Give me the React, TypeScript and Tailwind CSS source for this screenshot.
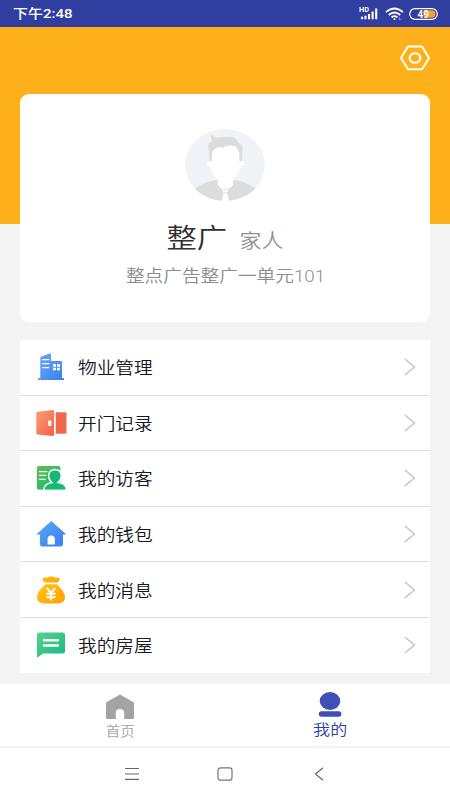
import type { ReactNode } from 'react'

interface MenuItem {
  label: string
  icon: ReactNode
}

function Gradient({ id, from, to }: { id: string; from: string; to: string }) {
  return (
    <defs>
      <linearGradient id={id} x1="0" y1="0" x2="1" y2="1">
        <stop offset="0" stopColor={from} />
        <stop offset="1" stopColor={to} />
      </linearGradient>
    </defs>
  )
}

function BuildingIcon() {
  return (
    <svg viewBox="0 0 32 32" className="size-8">
      <Gradient id="building" from="#6aaaf8" to="#3c7fee" />
      <path
        fill="url(#building)"
        d="M5.3 6.6Q5.3 5.7 6.2 5.4L14.8 2.4Q16 2 16 3.2V10H26Q27 10 27 11V27.3H29V29H3V27.3H5.3Z"
      />
      <path stroke="#fff" strokeWidth="1.3" d="M7.3 8.6h7M7.3 12.6h7M7.3 16.6h7" />
      <path fill="#fff" d="M18 13h3v2.8h-3zM22 13h3v2.8h-3zM18 16.7h3v2.6h-3zM22 16.7h3v2.6h-3z" />
    </svg>
  )
}

function DoorIcon() {
  return (
    <svg viewBox="0 0 32 32" className="size-8">
      <Gradient id="door" from="#f9a072" to="#f35f47" />
      <path
        fill="url(#door)"
        d="M1.3 6Q1.3 4.9 2.4 4.8L17.6 3Q19 2.8 19 4.2V27.8Q19 29.2 17.6 29L2.4 27.4Q1.3 27.2 1.3 26.2Z"
      />
      <rect x="20.7" y="5.3" width="10.8" height="21.4" rx="1" fill="#f3684c" />
      <rect x="13" y="13.3" width="3.4" height="6" rx="1.7" fill="#fff" />
    </svg>
  )
}

function VisitorIcon() {
  return (
    <svg viewBox="0 0 32 32" className="size-8">
      <Gradient id="visitor" from="#65bd51" to="#10b97c" />
      <rect x="1.8" y="4" width="23.6" height="23.8" rx="1.8" fill="url(#visitor)" />
      <path stroke="#fff" strokeWidth="1.4" strokeLinecap="round" d="M4.6 9.6h7.2M4.6 13.4h6M4.6 17.4h5.4" />
      <path
        fill="#16ba76"
        stroke="#fff"
        strokeWidth="1.5"
        d="M9 27Q9.4 22 17 20.6Q13.6 17.8 13.6 13.6Q14 7.6 20 7.4Q26 7.6 26.4 13.6Q26.4 17.8 23.2 20.4Q31 21.6 31.3 27Q31.3 28.6 29.6 28.6H10.6Q9 28.6 9 27Z"
      />
      <path fill="#fff" d="M0 27.8h32V32H0z" />
    </svg>
  )
}

function WalletIcon() {
  return (
    <svg viewBox="0 0 32 32" className="size-8">
      <Gradient id="wallet" from="#55a9f7" to="#3b7eef" />
      <path
        fill="url(#wallet)"
        stroke="url(#wallet)"
        strokeWidth="1"
        strokeLinejoin="round"
        d="M16.3 3.6 30.3 16H27.5V26.6Q27.5 28 26 28H7Q5.4 28 5.4 26.6V16H2.3Z"
      />
      <path fill="#fff" d="M12.6 26.6V21Q12.6 17.4 16.2 17.4T19.8 21V26.6Z" />
    </svg>
  )
}

function MoneyBagIcon() {
  return (
    <svg viewBox="0 0 32 32" className="size-8">
      <Gradient id="bag" from="#ffc414" to="#ffa200" />
      <path
        fill="url(#bag)"
        d="M10.2 8.6Q6.2 6 7.8 4.2Q9 3 12 3.7Q13 2.2 16 2.2T20 3.7Q23.4 3 24.4 4.2Q25.8 6 21.8 8.6Z"
      />
      <path fill="url(#bag)" d="M10.6 10.2H21.6Q30 17.5 30 23Q30 29.4 22.5 29.4H9.6Q2 29.4 2 23Q2 17.5 10.6 10.2Z" />
      <path
        fill="none"
        stroke="#fff"
        strokeWidth="2"
        d="M11.8 14 16 19 20.2 14M16 18.6V26.4M11.4 19.8H20.6M11.4 23.2H20.6"
      />
    </svg>
  )
}

function MessageIcon() {
  return (
    <svg viewBox="0 0 32 32" className="size-8">
      <Gradient id="message" from="#55d28c" to="#17b883" />
      <path
        fill="url(#message)"
        d="M2 5.8Q2 3.5 4.2 3.5H27.8Q30 3.5 30 5.8V22.2Q30 24.4 27.8 24.4H8L3 28.2Q2 28.8 2 27.6Z"
      />
      <path stroke="#fff" strokeWidth="2.4" strokeLinecap="round" d="M9 11.3h14M9 16.5h14" />
    </svg>
  )
}

function Avatar() {
  return (
    <svg viewBox="0 0 80 72" className="h-[72px] w-20">
      <defs>
        <clipPath id="avatar">
          <ellipse cx="40" cy="36" rx="40" ry="36" />
        </clipPath>
      </defs>
      <g clipPath="url(#avatar)">
        <path fill="#f1f3f9" d="M0 0h80v72H0z" />
        <path fill="#dcdcdc" d="M5 64Q14 53.5 32.5 50.8H48Q66 53.5 76 64V74H5Z" />
        <path
          fill="#fff"
          d="M26 16H55V31.5Q59 31 58.8 34.5Q58.3 38.2 55 38.4Q53.5 46 48 50.5V55.5Q45.5 60.3 40.3 60.3T32.6 55.5V50.5Q27.2 46 25.6 38.4Q22.6 38.2 22.2 34.5Q22 31 26 31.5Z"
        />
        <path
          fill="#dcdcdc"
          d="M24.2 32V22Q22 18 24.2 14Q27.2 13 26.3 10Q25.2 8 26.2 5Q29 9 34 8.4Q41 7.2 47 8Q52 9 53.2 13.5Q58.5 15.5 57.5 20L57 32H54.3V25Q53.5 18.5 49 17Q42 15.5 39 18Q37.5 19.5 34.6 19.2L36.5 17.5Q28.5 18 27 25V32Z"
        />
        <path fill="#fff" d="M36.8 59.6H43.6L42.2 64 44.2 72H36.6L38.6 64Z" />
        <path fill="#dcdcdc" d="M37.6 60.3H43V61H37.6ZM38.8 63H42V63.7H38.8Z" />
      </g>
    </svg>
  )
}

function StatusBar() {
  return (
    <header className="flex h-[27px] items-center justify-between bg-[#303f9f] pr-3 pl-[13px] text-white">
      <span className="origin-left scale-x-[1.19] pt-[2px] text-[12.6px] leading-none font-medium">下午2:48</span>
      <div className="flex items-center">
        <svg viewBox="0 0 20 14" className="mr-[6px] h-[14px] w-5">
          <text x="0" y="5.4" fontSize="6.5" fontWeight="700" fill="#fff" textLength="10" lengthAdjust="spacingAndGlyphs">
            HD
          </text>
          <path stroke="#fff" strokeWidth="2.1" d="M3 12.3V9.8M6.4 12.3V8.8M10 12.3V7M13.6 12.3V4.5M17.2 12.3V1.5" />
        </svg>
        <svg viewBox="0 0 20 14" className="mr-[4px] h-[14px] w-5" fill="none" stroke="#fff" strokeWidth="1.7">
          <path d="M1 5.2Q9.5-2.2 18 5.2M3.8 8Q9.5 3 15.2 8M6.5 10.3Q9.5 7.8 12.5 10.3" />
          <circle cx="9.5" cy="12" r="1" fill="#fff" stroke="none" />
          <path strokeWidth="1" d="M14.5 10.5v2.4M16 12v1" opacity="0.5" />
        </svg>
        <svg viewBox="0 0 29 12" className="h-3 w-[29px]">
          <rect x="0.7" y="0.7" width="27.6" height="10.6" rx="5.3" fill="none" stroke="#fff" strokeWidth="1.2" />
          <path fill="#f3a033" d="M14.5 2.2H23.5Q26.5 3 26.5 6T23.5 9.8H14.5Z" />
          <text x="8.6" y="9.6" fontSize="10" fontWeight="700" fill="#fff" textLength="11.4" lengthAdjust="spacingAndGlyphs">
            49
          </text>
        </svg>
      </div>
    </header>
  )
}

function ProfileCard() {
  return (
    <section className="flex h-[228px] flex-col items-center rounded-[9px] bg-white pt-[35px]">
      <Avatar />
      <div className="mt-[23px] flex h-[30px] scale-x-[1.125] items-baseline gap-[11px] leading-[30px]">
        <h1 className="text-[27px] font-[350] text-[#303030]">整广</h1>
        <span className="text-[19.5px] font-[350] text-[#929292]">家人</span>
      </div>
      <p className="mt-[11px] scale-x-[1.125] text-[16.6px] leading-6 font-[350] text-[#8c8c8c]">整点广告整广一单元101</p>
    </section>
  )
}

const menu: MenuItem[] = [
  { label: '物业管理', icon: <BuildingIcon /> },
  { label: '开门记录', icon: <DoorIcon /> },
  { label: '我的访客', icon: <VisitorIcon /> },
  { label: '我的钱包', icon: <WalletIcon /> },
  { label: '我的消息', icon: <MoneyBagIcon /> },
  { label: '我的房屋', icon: <MessageIcon /> },
]

function MenuRow({ label, icon }: MenuItem) {
  return (
    <li className="flex h-[55.6px] items-center border-b border-[#dedfe1] pr-[14px] pl-[15px] last:h-[55px] last:border-b-0">
      {icon}
      <span className="mt-1 ml-[11px] origin-left scale-x-[1.125] text-[16.6px] leading-6 font-[350] text-[#17191f]">
        {label}
      </span>
      <svg viewBox="0 0 12 18" className="ml-auto h-[18px] w-3" fill="none" stroke="#c8c8c8" strokeWidth="1.5">
        <path d="M1 1.2 10.5 9 1 16.8" />
      </svg>
    </li>
  )
}

function TabBar() {
  return (
    <nav className="flex h-[64px] justify-between border-b-2 border-[#f4f4f4] bg-white px-[90px]">
      <div className="flex w-[60px] flex-col items-center text-[#a3a3a3]">
        <svg viewBox="0 0 28 25" className="mt-[10px] h-[25px] w-7">
          <path
            fill="currentColor"
            d="M14 .5 27.3 8.1Q28 8.5 28 9.3V23.5Q28 25 26.5 25H18.2V18.5Q18 15 14 15T9.8 18.5V25H1.5Q0 25 0 23.5V9.3Q0 8.5.7 8.1Z"
          />
        </svg>
        <span className="mt-1 scale-x-[1.1] text-[13.3px] leading-[18px] font-[350]">首页</span>
      </div>
      <div className="flex w-[60px] flex-col items-center text-[#3f4fb4]">
        <svg viewBox="0 0 24 26" className="mt-2 h-[26px] w-6">
          <ellipse cx="12" cy="9" rx="10.3" ry="9" fill="currentColor" />
          <rect x="0.8" y="19.3" width="22.6" height="5.4" rx="2.7" fill="currentColor" />
        </svg>
        <span className="mt-[2px] scale-x-[1.125] text-[15.2px] leading-[20px] font-[350] text-[#303f9f]">我的</span>
      </div>
    </nav>
  )
}

function SystemNav() {
  return (
    <footer className="flex h-[52px] items-center bg-white pl-[124px]">
      <svg viewBox="0 0 16 14" className="h-[14px] w-4" stroke="#666" strokeWidth="1.2">
        <path d="M1 1.5h14M1 7h14M1 12.3h14" />
      </svg>
      <svg viewBox="0 0 16 14" className="ml-[77px] h-[14px] w-4" fill="none" stroke="#777" strokeWidth="1.2">
        <rect x="1" y="0.8" width="14" height="12.4" rx="2.5" />
      </svg>
      <svg viewBox="0 0 10 14" className="ml-[81px] h-[14px] w-[10px]" fill="none" stroke="#666" strokeWidth="1.2">
        <path d="M9 .7 1.5 7 9 13.3" />
      </svg>
    </footer>
  )
}

export default function App() {
  return (
    <div className="flex h-[800px] w-[450px] flex-col overflow-hidden bg-[#f4f4f4] font-['Roboto','Noto_Sans_CJK_SC',sans-serif]">
      <StatusBar />
      <div className="h-[197px] shrink-0 bg-[#ffb11b] px-5">
        <div className="flex h-[67px] items-start justify-end pt-[18px]">
          <svg viewBox="0 0 30 26" className="h-[26px] w-[30px]" fill="none" stroke="#fff" strokeWidth="2">
            <path strokeLinejoin="round" d="M8 1.6H22L29 13 22 24.2H8L1 13Z" />
            <ellipse cx="15" cy="13" rx="5.4" ry="4.8" />
          </svg>
        </div>
        <ProfileCard />
      </div>
      <ul className="mx-5 mt-[116px] bg-white">
        {menu.map((item) => (
          <MenuRow key={item.label} {...item} />
        ))}
      </ul>
      <div className="mt-auto">
        <TabBar />
        <SystemNav />
      </div>
    </div>
  )
}
